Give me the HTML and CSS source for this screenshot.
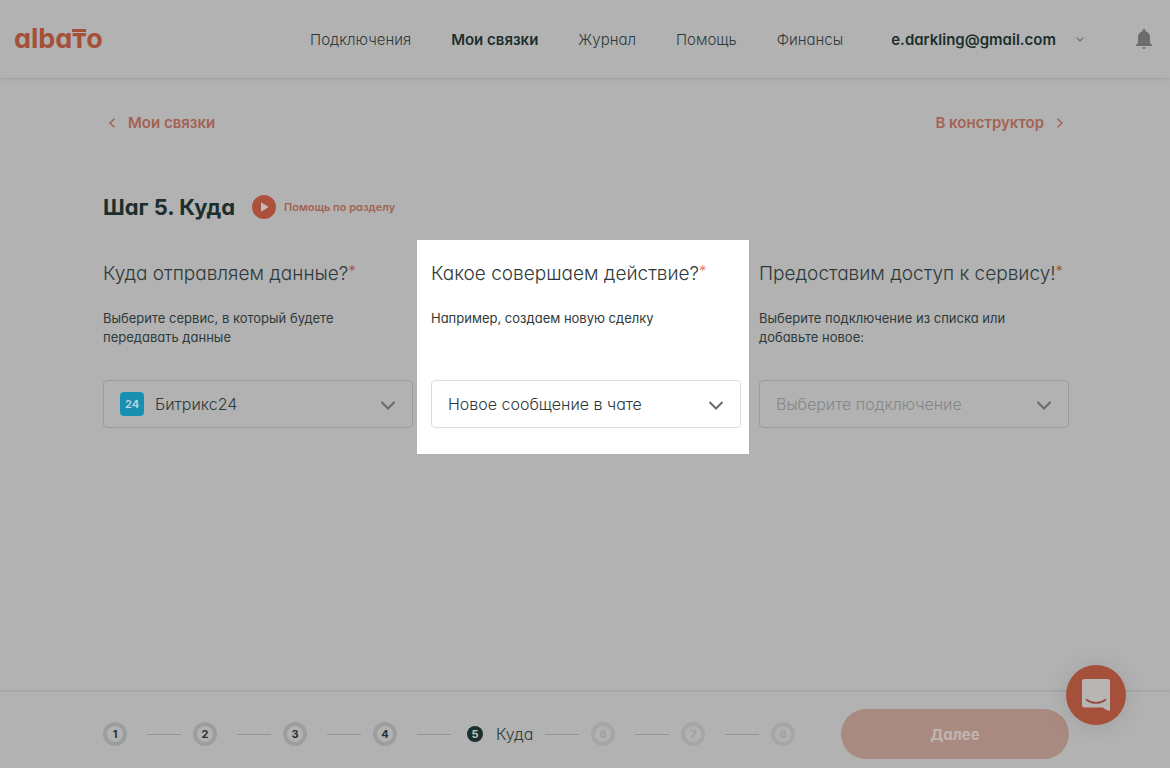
FILE: index.html
```html
<!DOCTYPE html>
<html lang="ru">
<head>
<meta charset="utf-8">
<title>Albato — Шаг 5. Куда</title>
<meta name="viewport" content="width=device-width, initial-scale=1">
<link rel="stylesheet" href="styles.css">
</head>
<body>
<div class="page">
  <header class="header">
    <a class="logo" href="#">alba<span class="logo-t">т</span>o</a>
    <nav class="nav">
      <a href="#">Подключения</a>
      <a class="active" href="#">Мои связки</a>
      <a href="#">Журнал</a>
      <a href="#">Помощь</a>
      <a href="#">Финансы</a>
    </nav>
    <button class="account" type="button">e.darkling@gmail.com
      <svg width="8" height="5" viewBox="0 0 8 5"><path d="M.7.700 4 4 7.300.700" fill="none" stroke="#6b7070" stroke-width="1.200"/></svg>
    </button>
    <button class="bell" type="button" aria-label="Уведомления">
      <svg width="18" height="20" viewBox="0 0 18 20"><path d="M9 0c.9 0 1.500.6 1.500 1.500v.7C13.600 3 15 5.500 15 8.500V14l2.300 2.200V17H.7v-.8L3 14V8.500C3 5.500 4.400 3 7.500 2.200v-.7C7.500.6 8.100 0 9 0Z" fill="#6b6c6c"/><path d="M7.300 18.200h3.400A1.700 1.700 0 0 1 9 19.900a1.700 1.700 0 0 1-1.700-1.700Z" fill="#6b6c6c"/></svg>
    </button>
  </header>

  <main class="main">
    <div class="crumbs">
      <a href="#"><svg width="8" height="10" viewBox="0 0 8 10"><path d="M6.500.8 2 5l4.500 4.200" fill="none" stroke="#a36253" stroke-width="1.500"/></svg>Мои связки</a>
      <a href="#">В конструктор<svg width="8" height="10" viewBox="0 0 8 10"><path d="M1.500.8 6 5 1.500 9.200" fill="none" stroke="#a36253" stroke-width="1.500"/></svg></a>
    </div>

    <div class="title">
      <h1>Шаг 5. Куда</h1>
      <a class="help" href="#"><svg width="24" height="24" viewBox="0 0 24 24"><circle cx="12" cy="12" r="12" fill="#ac523c"/><path d="M9.500 8v8l6.500-4Z" fill="#c0bab8" stroke="#c0bab8" stroke-linejoin="round"/></svg>Помощь по разделу</a>
    </div>

    <div class="columns">
      <section class="column">
        <h2><label for="service">Куда отправляем данные?</label><sup>*</sup></h2>
        <p>Выберите сервис, в который будете передавать данные</p>
        <div class="field with-icon">
          <span class="service-icon">24</span>
          <select id="service"><option>Битрикс24</option></select>
          <svg class="arrow" width="16" height="9" viewBox="0 0 16 9"><path d="m1.500 1 6.500 6.500L14.500 1"/></svg>
        </div>
      </section>
      <section class="column spotlight">
        <h2><label for="action">Какое совершаем действие?</label><sup>*</sup></h2>
        <p>Например, создаем новую сделку</p>
        <div class="field">
          <select id="action"><option>Новое сообщение в чате</option></select>
          <svg class="arrow" width="16" height="9" viewBox="0 0 16 9"><path d="m1.500 1 6.500 6.500L14.500 1"/></svg>
        </div>
      </section>
      <section class="column">
        <h2><label for="access">Предоставим доступ к сервису!</label><sup>*</sup></h2>
        <p>Выберите подключение из списка или добавьте новое:</p>
        <div class="field empty">
          <select id="access"><option>Выберите подключение</option></select>
          <svg class="arrow" width="16" height="9" viewBox="0 0 16 9"><path d="m1.500 1 6.500 6.500L14.500 1"/></svg>
        </div>
      </section>
    </div>
  </main>

  <footer class="footer">
    <ol class="steps">
      <li><span class="dot">1</span></li>
      <li><span class="dot">2</span></li>
      <li><span class="dot">3</span></li>
      <li><span class="dot">4</span></li>
      <li class="current"><span class="dot">5</span><span class="name">Куда</span></li>
      <li class="todo"><span class="dot">6</span></li>
      <li class="todo"><span class="dot">7</span></li>
      <li class="todo"><span class="dot">8</span></li>
    </ol>
    <button class="next" type="button">Далее</button>
  </footer>

  <button class="chat" type="button" aria-label="Чат">
    <svg width="28" height="32" viewBox="0 0 28 32"><path d="M2.500 0h23A2.500 2.500 0 0 1 28 2.500V32c-2.500-.5-5-1.800-7.200-3.500H2.500A2.500 2.500 0 0 1 0 26V2.500A2.500 2.500 0 0 1 2.500 0Z" fill="#b8b6b4"/><path d="M4.500 20.800c5.500 4.200 13.500 4.200 19 0" fill="none" stroke="#96503f" stroke-width="1.800" stroke-linecap="round"/></svg>
  </button>
</div>
</body>
</html>
```
FILE: styles.css
```css
* { box-sizing: border-box; }

body {
  margin: 0;
  background: #b2b2b2;
  color: #2e3a39;
  font-family: Inter, "Open Sans", sans-serif;
  font-size: 15px;
  font-weight: 300;
  font-feature-settings: "cv11";
}

a { color: inherit; text-decoration: none; }

button {
  border: 0;
  padding: 0;
  background: none;
  color: inherit;
  font: inherit;
  font-feature-settings: inherit;
  cursor: pointer;
}

.page {
  display: flex;
  flex-direction: column;
  min-height: 100vh;
}

.header {
  display: flex;
  align-items: center;
  height: 78px;
  padding: 0 17px 0 14px;
  box-shadow: 0 1px 3px rgba(0, 0, 0, 0.12);
}

.logo {
  color: #a4503a;
  font-size: 27px;
  font-weight: 700;
  line-height: 32px;
}

.logo-t {
  display: inline-block;
  position: relative;
}

.logo-t::before {
  content: "";
  position: absolute;
  top: 6px;
  left: 0;
  right: 0;
  height: 3px;
  background: #a4503a;
}

.nav {
  display: flex;
  gap: 40px;
  margin-left: auto;
}

.active { color: #1c2f2c; font-weight: 600; }

.account {
  display: flex;
  align-items: center;
  gap: 20px;
  margin-left: 48px;
  color: #1c2f2c;
  font-weight: 600;
}

.bell { margin-left: 51px; }
.bell svg, .help svg, .chat svg { display: block; }

.main {
  flex: 1;
  padding: 34px 101px 40px 103px;
}

.crumbs {
  display: flex;
  justify-content: space-between;
  padding: 0 5px;
  color: #a36253;
  font-weight: 600;
  line-height: 22px;
}

.crumbs a {
  display: flex;
  align-items: center;
  gap: 12px;
}

.title {
  display: flex;
  align-items: center;
  gap: 17px;
  margin-top: 57px;
}

h1 {
  margin: 0;
  color: #1c2f2c;
  font-size: 22px;
  font-weight: 700;
  line-height: 32px;
}

.help {
  display: flex;
  align-items: center;
  gap: 8px;
  color: #a36253;
  font-size: 11px;
  font-weight: 600;
}

.columns {
  display: grid;
  grid-template-columns: repeat(3, minmax(0, 1fr));
  gap: 18px;
  margin-top: 17px;
}

.column { padding: 20px 0 26px; }

.spotlight {
  margin: 0 -8px 0 -14px;
  padding-left: 14px;
  padding-right: 8px;
  background: #fff;
}

h2 {
  margin: 0;
  font-size: 19px;
  font-weight: 300;
  line-height: 28px;
  white-space: nowrap;
}

sup {
  position: relative;
  top: 3px;
  color: #a4503a;
  font-size: 15px;
  line-height: 0;
}

.spotlight sup { color: #e2725b; }

p {
  min-height: 38px;
  margin: 21px 0 33px;
  padding-right: 40px;
  font-size: 13px;
  font-weight: 400;
  line-height: 19px;
}

.field { position: relative; }

select {
  display: block;
  width: 100%;
  height: 48px;
  padding: 0 44px 0 16px;
  appearance: none;
  border: 1px solid #9b9d9d;
  border-radius: 4px;
  background: transparent;
  color: #2e3a39;
  font: inherit;
  font-size: 16px;
  font-feature-settings: inherit;
}

.spotlight select { border-color: #dcdddd; }
.with-icon select { padding-left: 51px; }
.empty select { color: #858787; }

.arrow {
  position: absolute;
  top: 21px;
  right: 17px;
  fill: none;
  stroke: #666b6a;
  stroke-width: 2;
  pointer-events: none;
}

.service-icon {
  position: absolute;
  top: 12px;
  left: 17px;
  width: 24px;
  height: 24px;
  border-radius: 4px;
  background: #168fb1;
  color: #b5d3dc;
  font-size: 11px;
  font-weight: 700;
  line-height: 24px;
  text-align: center;
}

.footer {
  display: flex;
  align-items: center;
  justify-content: space-between;
  height: 76px;
  padding: 8px 101px 0 103px;
  box-shadow: 0 -1px 3px rgba(0, 0, 0, 0.12);
}

.steps {
  display: flex;
  margin: 0;
  padding: 0;
  list-style: none;
}

.steps li {
  display: flex;
  align-items: center;
}

.steps li + li::before {
  content: "";
  width: 34px;
  height: 1px;
  margin: 0 12px 0 20px;
  background: #959797;
}

.steps .current + li::before { margin-left: 12px; }

.dot {
  width: 24px;
  height: 24px;
  border: 4px solid #9b9e9d;
  border-radius: 50%;
  color: #263230;
  font-size: 11px;
  font-weight: 700;
  line-height: 16px;
  text-align: center;
}

.current .dot {
  border-color: transparent;
  background: #1c2f2c;
  background-clip: padding-box;
  color: #c0c8c6;
}

.todo .dot { border-color: #a5a6a6; color: #a0a1a1; }

.name {
  margin-left: 9px;
  font-size: 16px;
}

.next {
  width: 228px;
  height: 50px;
  border-radius: 25px;
  background: #a98a81;
  color: #c1b5b1;
  font-weight: 700;
}

.chat {
  position: fixed;
  right: 44px;
  bottom: 43px;
  display: grid;
  place-items: center;
  width: 60px;
  height: 60px;
  border-radius: 50%;
  background: #a4503a;
  box-shadow: 0 2px 24px rgba(0, 0, 0, 0.1);
}
```
